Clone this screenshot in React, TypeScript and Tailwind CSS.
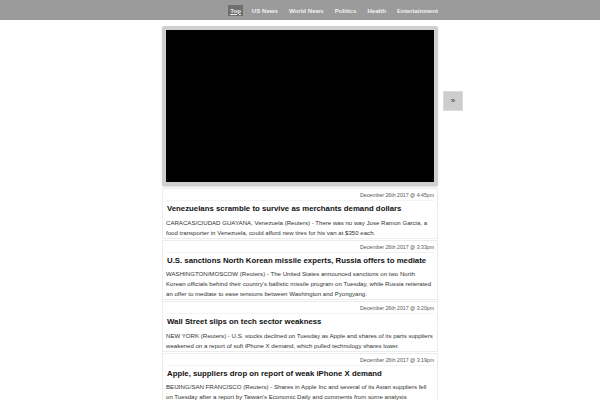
import React from "react";

const nav = ["Top", "US News", "World News", "Politics", "Health", "Entertainment"];

const stories = [
  {
    date: "December 26th 2017 @ 4:45pm",
    title: "Venezuelans scramble to survive as merchants demand dollars",
    lines: [
      "CARACAS/CIUDAD GUAYANA, Venezuela (Reuters) - There was no way Jose Ramon Garcia, a",
      "food transporter in Venezuela, could afford new tires for his van at $350 each.",
    ],
  },
  {
    date: "December 26th 2017 @ 3:33pm",
    title: "U.S. sanctions North Korean missile experts, Russia offers to mediate",
    lines: [
      "WASHINGTON/MOSCOW (Reuters) - The United States announced sanctions on two North",
      "Korean officials behind their country's ballistic missile program on Tuesday, while Russia reiterated",
      "an offer to mediate to ease tensions between Washington and Pyongyang.",
    ],
  },
  {
    date: "December 26th 2017 @ 3:20pm",
    title: "Wall Street slips on tech sector weakness",
    lines: [
      "NEW YORK (Reuters) - U.S. stocks declined on Tuesday as Apple and shares of its parts suppliers",
      "weakened on a report of soft iPhone X demand, which pulled technology shares lower.",
    ],
  },
  {
    date: "December 26th 2017 @ 3:19pm",
    title: "Apple, suppliers drop on report of weak iPhone X demand",
    lines: [
      "BEIJING/SAN FRANCISCO (Reuters) - Shares in Apple Inc and several of its Asian suppliers fell",
      "on Tuesday after a report by Taiwan's Economic Daily and comments from some analysts",
      "suggested iPhone X demand would be weaker than expected in the first quarter.",
    ],
  },
];

export default function App() {
  return (
    <div className="w-[600px] h-[400px] overflow-hidden bg-white font-['Liberation_Sans',Arial,sans-serif]">
      <div className="h-[20px] bg-[#9b9b9b] flex items-center justify-end pr-[160px] gap-[7px]">
        {nav.map((n, i) => (
          <span
            key={n}
            className={
              "text-[6.1px] font-bold leading-[11px] px-[2px] text-[#f2f2f2] " +
              (i === 0 ? "bg-[#6f6f6f] underline" : "")
            }
          >
            {n}
          </span>
        ))}
      </div>
      <div className="grid grid-cols-[1fr_276px_1fr] pt-[6px]">
        <div />
        <div className="flex flex-col">
          <div className="bg-[#cfcfcf] p-[4px] rounded-[2px] mb-[2px] shadow-[0_1px_2px_rgba(0,0,0,0.15)]">
            <div className="h-[152px] bg-black" />
          </div>
          {stories.map((s) => (
            <div key={s.date} className="border border-[#ececec] bg-white px-[3px] pt-[2px] mb-[1px]">
              <div className="text-right text-[5.2px] leading-[8px] text-[#555] border-b border-[#f3f3f3] pb-[1px]">{s.date}</div>
              <div className="text-[7.8px] font-bold leading-[10px] text-[#111] mt-[3px] pl-[1px]">{s.title}</div>
              <div className="text-[6.1px] leading-[10px] text-[#333] mt-[3.5px]">
                {s.lines.map((l) => (
                  <div key={l} className="whitespace-nowrap">{l}</div>
                ))}
              </div>
            </div>
          ))}
        </div>
        <div className="pl-[5px] pt-[65px]">
          <div className="w-[20px] h-[20px] bg-[#cdcdcd] border border-[#dcdcdc] flex items-center justify-center text-[8px] text-[#333]">»</div>
        </div>
      </div>
    </div>
  );
}
